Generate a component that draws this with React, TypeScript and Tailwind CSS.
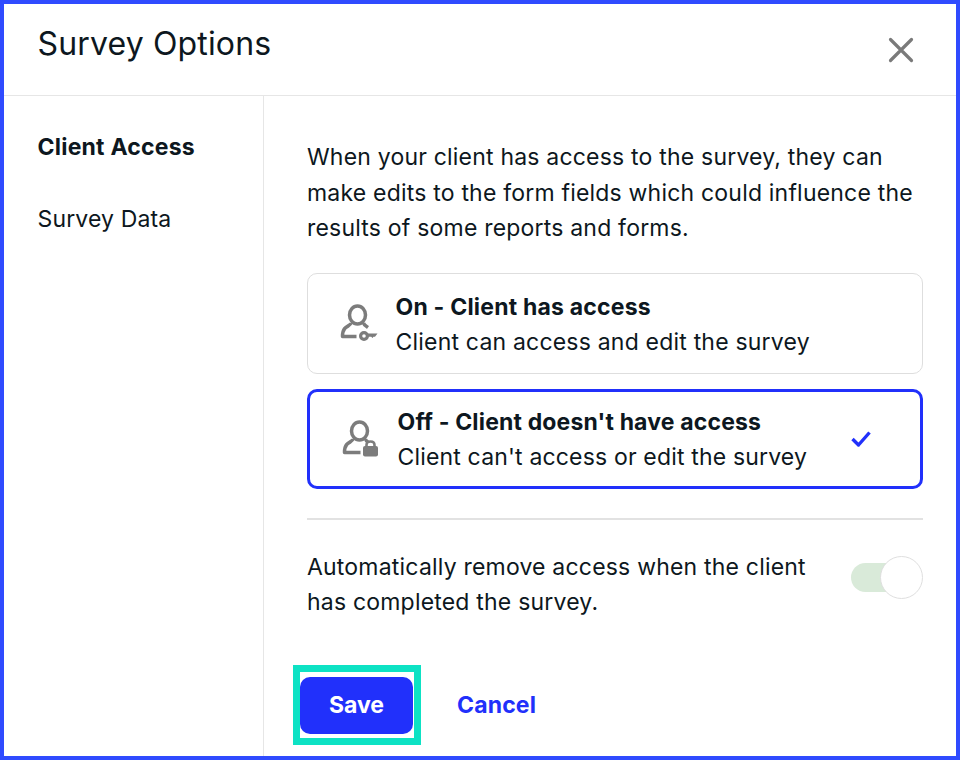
const UserKey = () => (
  <svg width="38" height="38" viewBox="0 0 38 38" fill="none" className="shrink-0">
    <ellipse cx="17.500" cy="11" rx="8" ry="9" stroke="#7c7c7c" strokeWidth="3.500" />
    <path d="M11 19c-.5 2.500-4 3-6.300 5.500-1.700 2-2.200 4.500-2.200 8h14" stroke="#7c7c7c" strokeWidth="3.500" strokeLinejoin="round" />
    <path d="M23.500 19c.5 2 2.500 3 4.500 4.500" stroke="#7c7c7c" strokeWidth="3.500" />
    <circle cx="24" cy="32" r="3.400" stroke="#7c7c7c" strokeWidth="3.200" />
    <path d="M27 29.500h10.500l-2.500 3.200h-1.500l-1 1.300-1.300-1.300H27z" fill="#7c7c7c" />
  </svg>
);

const UserLock = () => (
  <svg width="38" height="38" viewBox="0 0 38 38" fill="none" className="shrink-0">
    <ellipse cx="17.500" cy="11" rx="8" ry="9" stroke="#7c7c7c" strokeWidth="3.500" />
    <path d="M11 19c-.5 2.500-4 3-6.300 5.500-1.700 2-2.200 4.500-2.200 8h16" stroke="#7c7c7c" strokeWidth="3.500" strokeLinejoin="round" />
    <path d="M23.500 19c.3 1.500 1.300 2.300 2.500 3" stroke="#7c7c7c" strokeWidth="3.500" />
    <rect x="21" y="26" width="15" height="10.500" rx="2" fill="#7c7c7c" />
    <path d="M24.500 27v-2c0-2.200 1.500-3.500 4-3.500s4 1.300 4 3.500v2" stroke="#7c7c7c" strokeWidth="2.600" />
  </svg>
);

export default function App() {
  return (
    <div className="w-[960px] h-[760px] border-4 border-[#2f4bff] bg-white flex flex-col text-[#0d1720] font-['Inter',sans-serif] overflow-hidden">
      <div className="h-[92px] shrink-0 border-b border-[#e6e6e6] flex justify-between pl-[33.500px] pr-[41px]">
        <h1 className="text-[32px] leading-[36px] mt-[22px] tracking-[0.15px] font-normal">Survey Options</h1>
        <svg width="28" height="28" viewBox="0 0 28 28" className="mt-[32px]" fill="none">
          <path d="M3.500 3.500l21 21M24.500 3.500l-21 21" stroke="#7a7a7a" strokeWidth="3.200" strokeLinecap="round" />
        </svg>
      </div>
      <div className="flex flex-1 min-h-0">
        <div className="w-[260px] shrink-0 border-r border-[#e6e6e6] pl-[33.500px] pt-[33px] text-[23px] leading-[36px]">
          <div className="font-bold tracking-[0.22px]">Client Access</div>
          <div className="mt-[36px] tracking-[0.15px]">Survey Data</div>
        </div>
        <div className="flex-1 pl-[43px] pr-[33px] pt-[44px]">
          <p className="text-[23px] leading-[35.500px] tracking-[0.2px]">
            When your client has access to the survey, they can make edits to the form fields which could influence the results of some reports and forms.
          </p>
          <div className="mt-[26px] h-[101px] rounded-[10px] border border-[#dedede] flex items-center pl-[32px]">
            <UserKey />
            <div className="ml-[17.500px] pt-[4px] text-[23px] leading-[35px]">
              <div className="font-bold tracking-[0.2px]">On - Client has access</div>
              <div className="tracking-[0.2px]">Client can access and edit the survey</div>
            </div>
          </div>
          <div className="mt-[15px] h-[100px] rounded-[10px] border-[3px] border-[#2130fb] flex items-center pl-[32px] pr-[49px]">
            <UserLock />
            <div className="ml-[17.500px] pt-[2px] flex-1 text-[23px] leading-[35px]">
              <div className="font-bold tracking-[0.16px]">Off - Client doesn't have access</div>
              <div className="tracking-[0.17px]">Client can't access or edit the survey</div>
            </div>
            <svg width="20" height="18" viewBox="0 0 20 18" fill="none">
              <path d="M1.500 9l6 6L18.500 2.500" stroke="#2130fb" strokeWidth="3.400" strokeLinejoin="round" />
            </svg>
          </div>
          <div className="mt-[29px] border-t-2 border-[#e2e2e2]" />
          <div className="mt-[30px] flex items-start justify-between">
            <p className="text-[23px] leading-[35px] tracking-[0.2px] w-[520px]">
              Automatically remove access when the client has completed the survey.
            </p>
            <div className="relative w-[72px] h-[43px] mt-[6px]">
              <div className="absolute left-0 top-[7px] h-[29px] w-[60px] rounded-full bg-[#d9ead9]" />
              <div className="absolute right-0 top-0 size-[43px] rounded-full bg-white border border-[#dfdfdf]" />
            </div>
          </div>
          <div className="mt-[45px] flex items-center">
            <div className="-ml-[14px] border-[7px] border-[#0de2c4] bg-white w-[128px] h-[80px] pt-[5px]">
              <button className="block w-[113px] h-[57px] rounded-[10px] bg-[#2130fb] text-white font-bold text-[23px]">Save</button>
            </div>
            <button className="ml-[36px] pt-[2px] text-[#2130fb] font-bold text-[23px] tracking-[0.15px]">Cancel</button>
          </div>
        </div>
      </div>
    </div>
  );
}
